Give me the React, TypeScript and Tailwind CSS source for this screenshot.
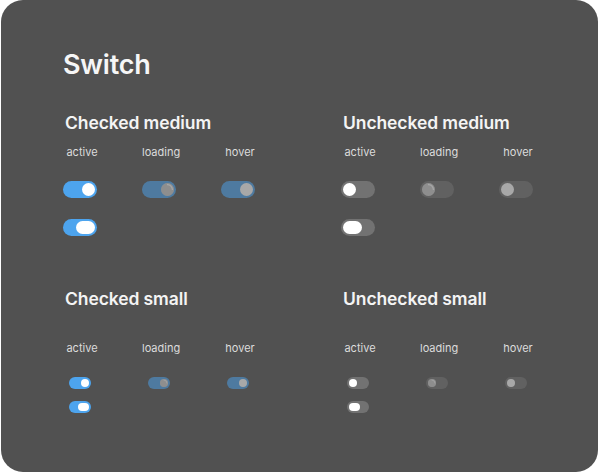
import React from "react";

type State = "active" | "pressed" | "loading" | "hover";

function Switch({ size, checked, state }: { size: "md" | "sm"; checked: boolean; state: State }) {
  const md = size === "md";
  const dim = state === "loading" || state === "hover";
  const track = md ? "w-[34px] h-[17px] p-[2px]" : "w-[22px] h-[12px] p-[2px]";
  const knobSize = md
    ? state === "pressed"
      ? "w-[19px] h-[13px]"
      : "w-[13px] h-[13px]"
    : state === "pressed"
    ? "w-[11px] h-[8px]"
    : "w-[8px] h-[8px]";
  return (
    <div
      className={`${track} flex items-center rounded-full ${checked ? "justify-end bg-[#4da4ee]" : "justify-start bg-[#727272]"} ${dim ? "opacity-50" : ""}`}
    >
      <div className={`${knobSize} relative rounded-full bg-white`}>
        {state === "loading" && (
          <div className="absolute inset-0 rounded-full bg-[#555555] opacity-30" />
        )}
        {state === "loading" && (
          <svg className="absolute inset-0 h-full w-full" viewBox="0 0 20 20">
            <path d="M10 2.5 A7.5 7.5 0 0 1 17.5 10" fill="none" stroke="#ffffff" strokeWidth="1.8" strokeLinecap="round" />
          </svg>
        )}
      </div>
    </div>
  );
}

function Section({ title, checked, size }: { title: string; checked: boolean; size: "md" | "sm" }) {
  const md = size === "md";
  const states: State[] = ["active", "loading", "hover"];
  return (
    <div>
      <div className="pl-[2px] text-[17.5px] leading-[22px] font-semibold tracking-[-0.1px] text-[#f4f4f4]">{title}</div>
      <div className={`grid grid-cols-[79px_79px_79px] ${md ? "mt-[11px]" : "mt-[31px]"}`}>
        {["active", "loading", "hover"].map((l) => (
          <div key={l} className="w-[38px] text-center text-[11px] leading-[14px] text-[#dcdcdc]">
            {l}
          </div>
        ))}
      </div>
      <div className="mt-[22px] grid grid-cols-[79px_79px_79px]">
        {states.map((s) => (
          <div key={s} className="flex w-[34px] justify-center">
            <Switch size={size} checked={checked} state={s} />
          </div>
        ))}
      </div>
      <div className={`${md ? "mt-[21px]" : "mt-[12px]"} flex w-[34px] justify-center`}>
        <Switch size={size} checked={checked} state="pressed" />
      </div>
    </div>
  );
}

export default function App() {
  return (
    <div className="h-[474px] w-[600px] bg-white" style={{ fontFamily: "Inter, 'Noto Sans', sans-serif" }}>
      <div className="ml-px h-[472px] w-[597px] rounded-[22px] bg-[#515151] pl-[62px] pt-[48px]">
        <div className="text-[27px] leading-[34px] font-semibold tracking-[-0.2px] text-[#f6f6f6]">Switch</div>
        <div className="mt-[30px] grid grid-cols-[278px_278px]">
          <Section title="Checked medium" checked={true} size="md" />
          <Section title="Unchecked medium" checked={false} size="md" />
        </div>
        <div className="mt-[52px] grid grid-cols-[278px_278px]">
          <Section title="Checked small" checked={true} size="sm" />
          <Section title="Unchecked small" checked={false} size="sm" />
        </div>
      </div>
    </div>
  );
}
